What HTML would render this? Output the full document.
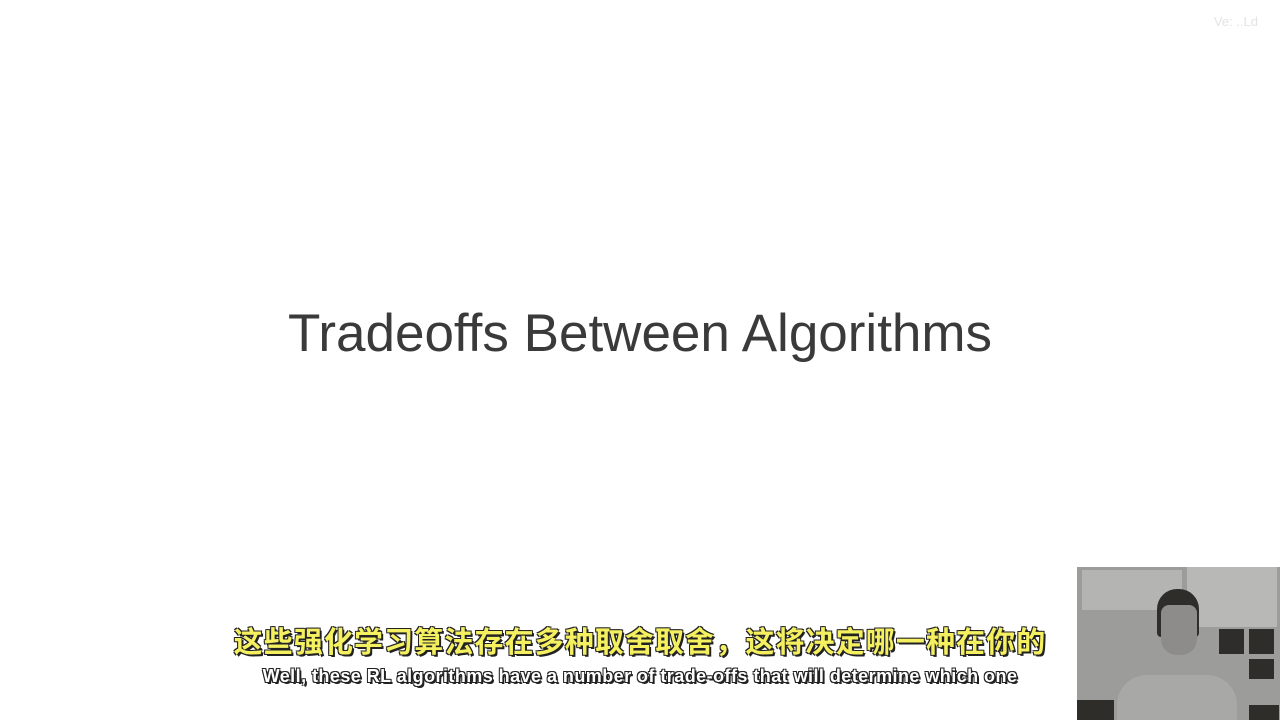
<!DOCTYPE html>
<html><head><meta charset="utf-8"><style>
html,body{margin:0;padding:0;}
body{width:1280px;height:720px;background:#fff;position:relative;overflow:hidden;font-family:"Liberation Sans","Noto Sans CJK SC",sans-serif;}
.title{position:absolute;left:0;width:1280px;top:303px;text-align:center;font-size:53px;color:#3a3a3a;font-family:"Liberation Sans","DejaVu Sans",sans-serif;white-space:nowrap;}
.zh{position:absolute;left:140px;width:1000px;top:620px;text-align:center;font-size:29px;line-height:40px;font-weight:bold;color:#f5f060;letter-spacing:1.1px;white-space:nowrap;font-family:"Noto Sans CJK SC",sans-serif;
text-shadow:2px 2px 0 #222,-1px -1px 0 #222,1px -1px 0 #222,-1px 1px 0 #222;}
.en{position:absolute;left:140px;width:1000px;top:666px;text-align:center;font-size:18px;letter-spacing:0.45px;font-weight:bold;color:#fff;white-space:nowrap;font-family:"Liberation Sans",sans-serif;
text-shadow:1px 1px 0 #222,-1px -1px 0 #222,1px -1px 0 #222,-1px 1px 0 #222,2px 2px 0 #222;}
.cam{position:absolute;left:1077px;top:567px;width:203px;height:153px;background:#9c9c9a;overflow:hidden;}
.cam div{position:absolute;}
.wm{position:absolute;right:22px;top:14px;font-size:13px;color:#e4e4e4;}
</style></head><body>
<div class="wm">Ve: ..Ld</div>
<div class="title">Tradeoffs Between Algorithms</div>
<div class="zh">这些强化学习算法存在多种取舍取舍，这将决定哪一种在你的</div>
<div class="en">Well, these RL algorithms have a number of trade-offs that will determine which one</div>
<div class="cam">
 <div style="left:5px;top:3px;width:100px;height:40px;background:#b4b4b2;"></div>
 <div style="left:110px;top:0;width:90px;height:60px;background:#b8b8b6;"></div>
 <div style="left:80px;top:22px;width:42px;height:48px;background:#2f2d2a;border-radius:20px 20px 4px 4px;"></div>
 <div style="left:84px;top:38px;width:36px;height:50px;background:#8e8c8a;border-radius:8px 8px 16px 16px;"></div>
 <div style="left:142px;top:62px;width:25px;height:25px;background:#2f2d2a;"></div>
 <div style="left:172px;top:62px;width:25px;height:25px;background:#2f2d2a;"></div>
 <div style="left:172px;top:92px;width:25px;height:20px;background:#2f2d2a;"></div>
 <div style="left:172px;top:138px;width:30px;height:15px;background:#2f2d2a;"></div>
 <div style="left:0;top:133px;width:37px;height:20px;background:#2f2d2a;"></div>
 <div style="left:40px;top:108px;width:120px;height:45px;background:#a8a8a6;border-radius:30px 30px 0 0;"></div>
</div>
</body></html>
